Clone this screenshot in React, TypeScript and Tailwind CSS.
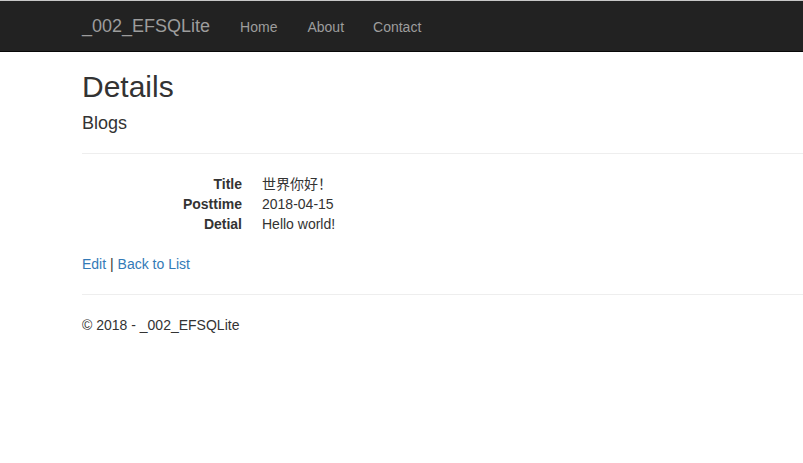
export default function App() {
  const font = {
    fontFamily: '"Liberation Sans", Arial, "Noto Sans CJK SC", sans-serif',
  };

  return (
    <div className="min-h-[463px] bg-white text-[14px] leading-[20px] text-[#333]" style={font}>
      <nav className="h-[52px] bg-[#222] border-t border-t-[#c8c8c8] border-b border-b-[#080808] flex items-center pl-[67px]">
        <a className="px-[15px] text-[18px] leading-[20px] text-[#9d9d9d]" href="#">
          _002_EFSQLite
        </a>
        <ul className="flex">
          <li>
            <a className="block px-[15px] pt-[1px] text-[#9d9d9d]" href="#">Home</a>
          </li>
          <li>
            <a className="block pl-[15px] pr-[14px] pt-[1px] text-[#9d9d9d]" href="#">About</a>
          </li>
          <li>
            <a className="block px-[15px] pt-[1px] text-[#9d9d9d]" href="#">Contact</a>
          </li>
        </ul>
      </nav>

      <div className="pl-[82px]">
        <h2 className="mt-[18px] text-[30px] leading-[33px] font-normal">Details</h2>

        <div>
          <h4 className="mt-[10px] mb-[10px] text-[18px] leading-[20px] font-medium">Blogs</h4>
          <hr className="mt-[20px] mb-[20px] border-0 border-t border-t-[#eee]" />
          <dl className="mb-[20px] grid grid-cols-[160px_1fr] gap-x-[20px]">
            <dt className="text-right font-bold">Title</dt>
            <dd>世界你好！</dd>
            <dt className="text-right font-bold">Posttime</dt>
            <dd>2018-04-15</dd>
            <dt className="text-right font-bold">Detial</dt>
            <dd>Hello world!</dd>
          </dl>
        </div>

        <p className="mb-[10px]">
          <a className="text-[#337ab7]" href="#">Edit</a> |{" "}
          <a className="text-[#337ab7]" href="#">Back to List</a>
        </p>

        <hr className="mt-[20px] mb-[20px] border-0 border-t border-t-[#eee]" />
        <footer>
          <p>© 2018 - _002_EFSQLite</p>
        </footer>
      </div>
    </div>
  );
}
